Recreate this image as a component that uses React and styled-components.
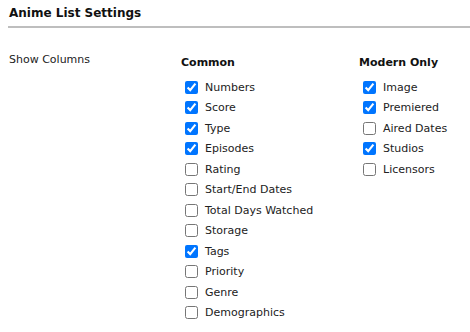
import React from 'react';
import styled, { createGlobalStyle } from 'styled-components';

const GlobalStyle = createGlobalStyle`
  body {
    margin: 0;
    background: #fff;
    font-family: "DejaVu Sans", Verdana, sans-serif;
    color: #111;
  }
`;

const Page = styled.div`
  padding: 6px 0 0 8px;
`;

const Title = styled.h2`
  margin: 0;
  padding: 0 0 6px 1px;
  font-size: 12px;
  font-weight: bold;
  border-bottom: 2px solid #bebebe;
`;

const Section = styled.div`
  display: flex;
  padding-top: 25px;
`;

const Label = styled.div`
  width: 172px;
  padding-left: 1px;
  font-size: 11px;
  color: #222;
`;

const Column = styled.div`
  width: ${p => p.width}px;
  padding-top: 3px;
`;

const Heading = styled.div`
  font-size: 11px;
  font-weight: bold;
  margin-bottom: 8px;
`;

const Option = styled.label`
  display: flex;
  align-items: center;
  height: 20.5px;
  font-size: 11px;
  color: #222;

  input {
    margin: 0 7px 0 4px;
    width: 13px;
    height: 13px;
  }
`;

const common = [
  ['Numbers', true],
  ['Score', true],
  ['Type', true],
  ['Episodes', true],
  ['Rating', false],
  ['Start/End Dates', false],
  ['Total Days Watched', false],
  ['Storage', false],
  ['Tags', true],
  ['Priority', false],
  ['Genre', false],
  ['Demographics', false],
];

const modern = [
  ['Image', true],
  ['Premiered', true],
  ['Aired Dates', false],
  ['Studios', true],
  ['Licensors', false],
];

const OptionList = ({ title, items, width }) => (
  <Column width={width}>
    <Heading>{title}</Heading>
    {items.map(([name, on]) => (
      <Option key={name}>
        <input type="checkbox" defaultChecked={on} />
        {name}
      </Option>
    ))}
  </Column>
);

export default function App() {
  return (
    <Page>
      <GlobalStyle />
      <Title>Anime List Settings</Title>
      <Section>
        <Label>Show Columns</Label>
        <OptionList title="Common" items={common} width={178} />
        <OptionList title="Modern Only" items={modern} width={110} />
      </Section>
    </Page>
  );
}
